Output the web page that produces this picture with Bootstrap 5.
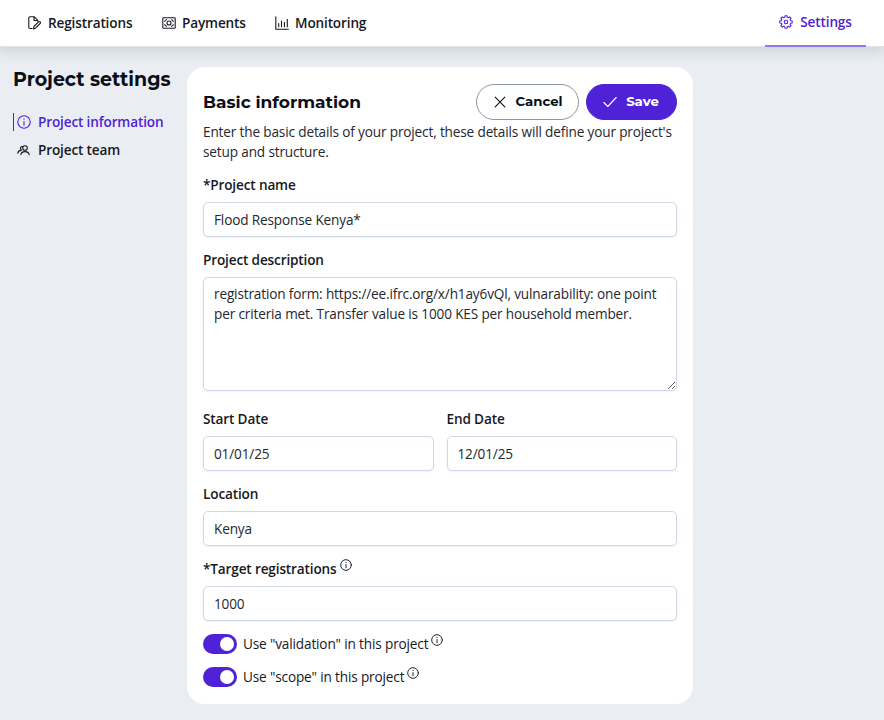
<!DOCTYPE html>
<html lang="en">
<head>
<meta charset="utf-8">
<meta name="viewport" content="width=device-width, initial-scale=1">
<title>Project settings</title>
<link href="https://cdn.jsdelivr.net/npm/bootstrap@5.3.0/dist/css/bootstrap.min.css" rel="stylesheet">
<style>
:root{--brand:#4f22d7}
body{font-family:"Open Sans","Noto Sans",sans-serif;font-size:13.6px;letter-spacing:-.15px;line-height:20px;color:#17191f;background:#eaeef3;height:720px;overflow:hidden}
svg{fill:none;stroke:currentColor;stroke-width:1.1;stroke-linecap:round;stroke-linejoin:round;flex:none}
.topbar{height:47px;padding:0 18px 0 28px;box-shadow:0 1px 14px 2px rgba(60,75,85,.2);border-bottom:1px solid #dfe4e9}
.topbar .nav-link{padding:0;color:#17191f;font-weight:600;height:46px;padding-bottom:1px;gap:7px}
.topbar .nav-link.first{width:134px}
.topbar .nav-link.second{width:113px;gap:6px}
.topbar .nav-link.third{gap:6px}
.topbar .nav-link.active{color:var(--brand);width:101px;height:47px;padding-bottom:1px;border-bottom:2px solid #9478e5;margin-bottom:-1px}
.heading{font-family:Montserrat,Inter,sans-serif;font-weight:700;letter-spacing:0;color:#0b0f17;margin:0;white-space:nowrap}
.sidebar{width:187px;padding:20px 0 0 13px}
.sidebar .heading{font-size:19px;line-height:26px}
.sidebar .nav-link{padding:0 0 0 3px;height:18px;color:#17191f;font-weight:600;gap:7px;border-left:1px solid transparent}
.sidebar .nav-link.active{color:var(--brand);border-color:var(--brand)}
.sidebar .nav-link+.nav-link{margin-top:10px}
.panel{width:506px;height:637px;margin-top:20px;border-radius:18px;padding:17px 16px 0 16px}
.panel .heading{font-size:17px;line-height:36px}
.pill{height:36px;border-radius:18px;font-family:Montserrat,Inter,sans-serif;font-weight:700;font-size:13.3px;letter-spacing:0;padding:0;gap:9px}
.pill.cancel{width:103px;border:1px solid #8b96a5;color:#0b0f17;padding-left:2px}
.pill.save{width:91px;margin-left:7px;background:var(--brand);border:1px solid var(--brand);color:#fff;padding-right:1px}
.intro{margin:2px 0 0;color:#25272d}
.form-label{display:flex;font-weight:600;margin:0;height:20px;white-space:nowrap}
.form-control{font-size:13.6px;letter-spacing:-.15px;line-height:20px;height:35px;padding:6px 10px;border:1px solid #cfd8e5;border-radius:5px;color:#25272d;margin-top:7px;box-shadow:0 1px 2px rgba(18,18,23,.05)}
textarea.form-control{height:114px;resize:vertical;overflow:hidden}
.field{margin-top:13px}
.dates{margin-top:18px;gap:13px}
.toggle{width:34px;height:20px;border-radius:10px;background:var(--brand);padding:3px;margin-right:6px}
.toggle i{width:14px;height:14px;border-radius:50%;background:#fff}
.hint{margin:0 0 8px 3px}
</style>
</head>
<body>
<header class="topbar bg-white d-flex justify-content-between position-relative">
<nav class="nav">
<a class="nav-link first d-flex align-items-center" href="#"><svg width="13" height="14" viewBox="0 0 13 14"><path d="M4 12.500H2A1.200 1.200 0 0 1 .8 11.300V2A1.200 1.200 0 0 1 2 .8h4.300l3.500 3.500v1M6 .9v3.600h3.500M5.500 12.900l.4-2.400 4.600-4.600a1.100 1.100 0 0 1 1.600 1.600l-4.600 4.700z"/></svg>Registrations</a>
<a class="nav-link second d-flex align-items-center" href="#"><svg width="14" height="12" viewBox="0 0 14 12"><rect x=".8" y=".8" width="12.400" height="10.400" rx=".8"/><circle cx="7" cy="6" r="2"/><path d="M2.500 4.200Q4 4 4.300 2.500M9.700 2.500Q10 4 11.500 4.200M2.500 7.800Q4 8 4.300 9.500M9.700 9.500Q10 8 11.500 7.800"/></svg>Payments</a>
<a class="nav-link third d-flex align-items-center" href="#"><svg width="14" height="14" viewBox="0 0 14 14"><path d="M.8.8v12.400h12.600M3.700 7.500v3.200M6.500 5v5.700M9.400 6.300v4.400M12.300 3.300v7.400"/></svg>Monitoring</a>
</nav>
<nav class="nav"><a class="nav-link active d-flex align-items-center justify-content-center" href="#"><svg width="14" height="14" viewBox="0 0 14 14"><path d="M5.700 2.300 6 .8h2l.3 1.500 1.100.5 1.300-.9 1.400 1.400-.9 1.300.5 1.100 1.500.3v2l-1.500.3-.5 1.100.9 1.300-1.400 1.400-1.300-.9-1.100.5L8 13.200H6l-.3-1.500-1.100-.5-1.300.9-1.400-1.400.9-1.300-.5-1.100L.8 8V6l1.500-.3.5-1.100-.9-1.300 1.400-1.400 1.300.9z"/><circle cx="7" cy="7" r="1.700"/></svg>Settings</a></nav>
</header>
<main class="d-flex align-items-start">
<aside class="sidebar flex-shrink-0">
<h1 class="heading">Project settings</h1>
<nav class="nav flex-column mt-3 pt-1">
<a class="nav-link active d-flex align-items-center" href="#"><svg width="14" height="14" viewBox="0 0 14 14"><circle cx="7" cy="7" r="6.200"/><path d="M7 6.500v3.700M7 3.900v.3"/></svg>Project information</a>
<a class="nav-link d-flex align-items-center" href="#"><svg width="14" height="12" viewBox="0 0 14 12" stroke-width="1"><circle cx="8" cy="4" r="2.300"/><path d="M3.800 10.600Q4.300 7.600 8 7.600T12.200 10.600M.8 9.200Q1 6.700 3.900 6.400M4.600 6A1.800 1.800 0 1 1 5.800 2.600"/></svg>Project team</a>
</nav>
</aside>
<section class="panel bg-white">
<div class="d-flex align-items-center"><h2 class="heading me-auto">Basic information</h2>
<button class="btn pill cancel d-flex align-items-center justify-content-center"><svg width="12" height="12" viewBox="0 0 12 12"><path d="M1.200 1.200l9.600 9.600M10.800 1.200l-9.600 9.600"/></svg>Cancel</button>
<button class="btn pill save d-flex align-items-center justify-content-center"><svg width="14" height="12" viewBox="0 0 14 12"><path d="M.8 6.500l4 4L13.200 1.500"/></svg>Save</button></div>
<p class="intro">Enter the basic details of your project, these details will define your project's setup and structure.</p>
<div class="field"><label class="form-label" for="n">*Project name</label><input id="n" class="form-control" value="Flood Response Kenya*"></div>
<div class="field"><label class="form-label" for="d">Project description</label><textarea id="d" class="form-control">registration form: https://ee.ifrc.org/x/h1ay6vQl, vulnarability: one point per criteria met. Transfer value is 1000 KES per household member.</textarea></div>
<div class="d-flex dates"><div class="flex-fill"><label class="form-label" for="s">Start Date</label><input id="s" class="form-control" value="01/01/25"></div><div class="flex-fill"><label class="form-label" for="e">End Date</label><input id="e" class="form-control" value="12/01/25"></div></div>
<div class="field"><label class="form-label" for="l">Location</label><input id="l" class="form-control" value="Kenya"></div>
<div class="field"><label class="form-label align-items-center" for="t">*Target registrations<svg class="hint" width="12" height="12" viewBox="0 0 14 14"><circle cx="7" cy="7" r="6.200"/><path d="M7 6.500v3.700M7 3.900v.3"/></svg></label><input id="t" class="form-control" value="1000"></div>
<div class="d-flex align-items-center field"><span class="toggle d-flex justify-content-end"><i></i></span>Use "validation" in this project<svg class="hint" width="12" height="12" viewBox="0 0 14 14"><circle cx="7" cy="7" r="6.200"/><path d="M7 6.500v3.700M7 3.900v.3"/></svg></div>
<div class="d-flex align-items-center field"><span class="toggle d-flex justify-content-end"><i></i></span>Use "scope" in this project<svg class="hint" width="12" height="12" viewBox="0 0 14 14"><circle cx="7" cy="7" r="6.200"/><path d="M7 6.500v3.700M7 3.900v.3"/></svg></div>
</section>
</main>
<script src="https://cdn.jsdelivr.net/npm/bootstrap@5.3.0/dist/js/bootstrap.bundle.min.js"></script>
</body>
</html>
